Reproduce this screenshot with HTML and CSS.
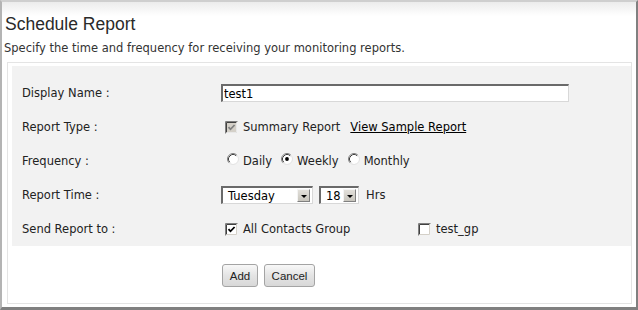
FILE: index.html
```html
<!DOCTYPE html>
<html lang="en">
<head>
    <meta charset="UTF-8">
    <title>Schedule Report</title>
    <link rel="stylesheet" href="styles.css">
</head>
<body>
    <div class="frame">
        <h1>Schedule Report</h1>
        <p class="intro">Specify the time and frequency for receiving your monitoring reports.</p>

        <div class="box">
            <div class="panel">
                <div class="form-row">
                    <div class="label">Display Name :</div>
                    <div class="value">
                        <input type="text" class="text-input" value="test1">
                    </div>
                </div>
                <div class="form-row">
                    <div class="label">Report Type :</div>
                    <div class="value">
                        <svg class="check" width="13" height="13" viewBox="0 0 13 13">
                            <rect x="1" y="1" width="11" height="11" fill="#d4d0c8"/>
                            <path d="M0.5 12.5V0.5H12.5" fill="none" stroke="#808080"/>
                            <path d="M1.5 11.5V1.5H11.5" fill="none" stroke="#404040"/>
                            <path d="M1.5 11.5H11.5V1.5" fill="none" stroke="#e8e8e8"/>
                            <path d="M3.5 6.2L5.5 8.3L9.6 4" fill="none" stroke="#808080" stroke-width="1.8"/>
                        </svg>
                        <span class="opt-text">Summary Report</span>
                        <a href="#" class="sample-link">View Sample Report</a>
                    </div>
                </div>
                <div class="form-row">
                    <div class="label">Frequency :</div>
                    <div class="value">
                        <span class="radio-item">
                            <svg class="radio" width="12" height="12" viewBox="0 0 12 12">
                                <circle cx="6" cy="6" r="5" fill="#fff"/>
                                <path d="M2.11 9.89A5.5 5.5 0 0 1 9.89 2.11" fill="none" stroke="#808080"/>
                                <path d="M2.82 9.18A4.5 4.5 0 0 1 9.18 2.82" fill="none" stroke="#404040"/>
                                <path d="M9.89 2.11A5.5 5.5 0 0 1 2.11 9.89" fill="none" stroke="#e4e4e4"/>
                            </svg>
                            <span class="radio-text">Daily</span>
                        </span>
                        <span class="radio-item">
                            <svg class="radio" width="12" height="12" viewBox="0 0 12 12">
                                <circle cx="6" cy="6" r="5" fill="#fff"/>
                                <path d="M2.11 9.89A5.5 5.5 0 0 1 9.89 2.11" fill="none" stroke="#808080"/>
                                <path d="M2.82 9.18A4.5 4.5 0 0 1 9.18 2.82" fill="none" stroke="#404040"/>
                                <path d="M9.89 2.11A5.5 5.5 0 0 1 2.11 9.89" fill="none" stroke="#e4e4e4"/>
                                <circle cx="6" cy="6" r="1.9" fill="#000"/>
                            </svg>
                            <span class="radio-text">Weekly</span>
                        </span>
                        <span class="radio-item">
                            <svg class="radio" width="12" height="12" viewBox="0 0 12 12">
                                <circle cx="6" cy="6" r="5" fill="#fff"/>
                                <path d="M2.11 9.89A5.5 5.5 0 0 1 9.89 2.11" fill="none" stroke="#808080"/>
                                <path d="M2.82 9.18A4.5 4.5 0 0 1 9.18 2.82" fill="none" stroke="#404040"/>
                                <path d="M9.89 2.11A5.5 5.5 0 0 1 2.11 9.89" fill="none" stroke="#e4e4e4"/>
                            </svg>
                            <span class="radio-text">Monthly</span>
                        </span>
                    </div>
                </div>
                <div class="form-row">
                    <div class="label">Report Time :</div>
                    <div class="value">
                        <div class="select select-day">
                            <span class="select-value">Tuesday</span>
                            <span class="select-btn"><span class="arrow"></span></span>
                        </div>
                        <div class="select select-hour">
                            <span class="select-value">18</span>
                            <span class="select-btn"><span class="arrow"></span></span>
                        </div>
                        <span class="hrs">Hrs</span>
                    </div>
                </div>
                <div class="form-row">
                    <div class="label">Send Report to :</div>
                    <div class="value">
                        <span class="group-item">
                            <svg class="check" width="13" height="13" viewBox="0 0 13 13">
                                <rect x="1" y="1" width="11" height="11" fill="#fff"/>
                                <path d="M0.5 12.5V0.5H12.5" fill="none" stroke="#808080"/>
                                <path d="M1.5 11.5V1.5H11.5" fill="none" stroke="#404040"/>
                                <path d="M1.5 11.5H11.5V1.5" fill="none" stroke="#d4d0c8"/>
                                <path d="M3.5 6.2L5.5 8.3L9.6 4" fill="none" stroke="#000" stroke-width="1.8"/>
                            </svg>
                            <span class="opt-text">All Contacts Group</span>
                        </span>
                        <span class="group-item">
                            <svg class="check" width="13" height="13" viewBox="0 0 13 13">
                                <rect x="1" y="1" width="11" height="11" fill="#fff"/>
                                <path d="M0.5 12.5V0.5H12.5" fill="none" stroke="#808080"/>
                                <path d="M1.5 11.5V1.5H11.5" fill="none" stroke="#404040"/>
                                <path d="M1.5 11.5H11.5V1.5" fill="none" stroke="#d4d0c8"/>
                            </svg>
                            <span class="opt-text">test_gp</span>
                        </span>
                    </div>
                </div>
            </div>

            <div class="buttons">
                <button type="button" class="btn btn-add">Add</button>
                <button type="button" class="btn btn-cancel">Cancel</button>
            </div>
        </div>
    </div>
</body>
</html>
```

FILE: styles.css
```css
html, body {
    margin: 0;
    padding: 0;
    background: #fff;
}
body {
    font-family: "DejaVu Sans", Verdana, sans-serif;
    font-size: 11.5px;
    color: #222;
}
.frame {
    width: 638px;
    height: 310px;
    box-sizing: border-box;
    border-top: 2px solid #cfcfcf;
    border-left: 2px solid #b4b4b4;
    border-right: 2px solid #808080;
    border-bottom: 3px solid #808080;
    background: linear-gradient(#ececec, #fff 14px);
    padding: 12px 4px 0 2px;
}
h1 {
    margin: 0 0 0 1px;
    font-family: "Liberation Sans", Arial, sans-serif;
    font-size: 17.5px;
    line-height: 20px;
    font-weight: normal;
    color: #2a2a2a;
}
.intro {
    margin: 7px 0 0 0;
    line-height: 14px;
    color: #333;
}
.box {
    margin: 7px 0 0 3px;
    border: 1px solid #e4e4e4;
    padding: 3px 0 16px 4px;
}
.panel {
    background: #f2f2f2;
    padding: 10px 0 0 10px;
}
.form-row {
    display: grid;
    grid-template-columns: 199px 1fr;
    height: 34px;
    align-items: center;
}
.value {
    display: flex;
    align-items: center;
}
.text-input {
    width: 348px;
    height: 18px;
    box-sizing: border-box;
    margin: 0;
    padding: 0 0 0 1px;
    border-style: solid;
    border-width: 2px 1px 1px 2px;
    border-color: #6a6a6a #d8d8d8 #d8d8d8 #6a6a6a;
    font-family: "DejaVu Sans", Verdana, sans-serif;
    font-size: 11.5px;
    color: #000;
    outline: none;
}
.check {
    display: block;
    margin-left: 4px;
    flex: none;
}
.opt-text {
    margin-left: 5px;
    line-height: 14px;
}
.sample-link {
    margin-left: 10px;
    color: #000;
    text-decoration: underline;
}
.radio-item {
    display: flex;
    align-items: center;
    margin-right: 9px;
}
.radio-item:first-child {
    margin-left: 6px;
}
.radio {
    display: block;
    flex: none;
    position: relative;
    top: -2px;
}
.radio-text {
    margin-left: 4px;
    line-height: 14px;
}
.select {
    display: flex;
    align-items: center;
    height: 18px;
    box-sizing: border-box;
    border-style: solid;
    border-width: 2px 1px 1px 2px;
    border-color: #6a6a6a #d8d8d8 #d8d8d8 #6a6a6a;
    background: #fff;
    padding-right: 2px;
}
.select-day {
    width: 92px;
}
.select-hour {
    width: 40px;
    margin-left: 6px;
}
.select-value {
    flex: 1;
    padding-left: 5px;
    color: #000;
}
.select-btn {
    display: flex;
    align-items: center;
    justify-content: center;
    width: 13px;
    height: 13px;
    box-sizing: border-box;
    border: 1px solid;
    border-color: #f4f4f4 #808080 #808080 #f4f4f4;
    background: linear-gradient(#e2e0da, #c8c5bd);
}
.arrow {
    width: 0;
    height: 0;
    border-left: 3px solid transparent;
    border-right: 3px solid transparent;
    border-top: 3px solid #000;
    margin-top: 1px;
}
.hrs {
    margin-left: 7px;
}
.group-item {
    display: flex;
    align-items: center;
    width: 193px;
}
.buttons {
    display: flex;
    gap: 6px;
    margin: 18px 0 0 210px;
}
.btn {
    height: 23px;
    box-sizing: border-box;
    padding: 0;
    border: 1px solid #a4a4a4;
    border-radius: 3px;
    background: linear-gradient(#f8f8f8, #e4e4e4 50%, #d8d8d8);
    font-family: "Liberation Sans", Arial, sans-serif;
    font-size: 11.5px;
    color: #222;
    cursor: pointer;
}
.btn-add {
    width: 36px;
}
.btn-cancel {
    width: 51px;
}
```
